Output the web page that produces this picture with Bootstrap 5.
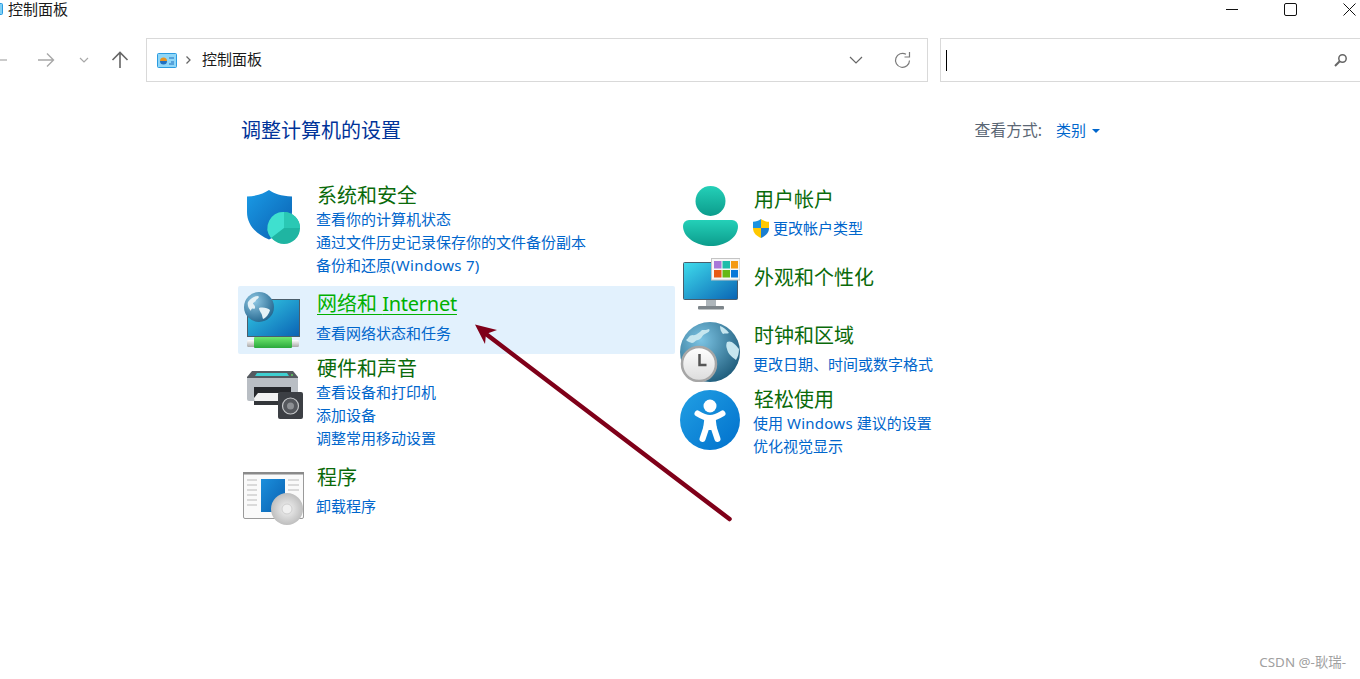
<!DOCTYPE html>
<html lang="zh-CN">
<head>
<meta charset="utf-8">
<title>控制面板</title>
<link rel="stylesheet" href="https://cdn.jsdelivr.net/npm/bootstrap@5.3.0/dist/css/bootstrap.min.css">
<style>
html,body{height:679px;overflow:hidden;background:#fff}
body{font-family:"Noto Sans","Noto Sans CJK SC",sans-serif;font-size:15px;color:#1a1a1a;position:relative}
.ttl-bar{height:18px;line-height:18px}
.ttl-icon{margin-left:-9px;margin-top:3px;margin-right:5px}
.win-btns{gap:46px;padding-right:4px}
.tool-row{margin-top:20px;gap:12px;height:44px}
.nav-art{width:134px;flex:none}
.addr-box,.find-box{border:1px solid #d9d9d9;height:44px}
.addr-box{flex:1 1 auto;padding:0 15px 0 10px}
.addr-txt{margin-left:10px;line-height:20px;margin-top:-3px}
.refresh-art{margin-left:31px}
.find-box{width:420px;flex:none;border-right:0;padding:0 12px 0 5px}
.caret-line{width:1px;height:21px;background:#000}
.main-head{margin-top:37px;padding:0 260px 0 241px;height:24px}
.main-title{font-size:20px;line-height:24px;color:#003399;font-weight:400;margin:0}
.view-wrap{margin-top:-1px}
.view-lbl{color:#5b6775;font-size:15.8px}
.view-val{color:#0066cc;text-decoration:none;margin-left:14px}
.view-tri{margin-left:6px;width:0;height:0;border:4px solid transparent;border-top:4px solid #0066cc;border-bottom:0}
.cols{margin-top:35px;margin-left:238px}
.col-left{width:437px;flex:none}
.col-right{margin-top:8px;margin-left:5px}
.item-l{padding:6px 0 10px 3px;border-radius:2px;gap:12px}
.item-first{padding-bottom:9px}
.item-tight{padding-top:3px}
.item-hot{background:#e2f1fd;padding-bottom:9px}
.hot-art{margin-bottom:-4px}
.printer-art{margin-top:-1px}
.item-r{gap:14px}
.pb-a{padding-bottom:10px}
.pb-b{padding-bottom:6px}
.pb-c{padding-bottom:5px}
.txt-a{margin-top:2px}
.txt-b{margin-top:10px}
.txt-c{margin-top:1px}
.mt-icon{margin-top:3px}
.cat-title{font-size:20px;line-height:24px;color:#0a6a0a;text-decoration:none;display:block}
.hot-title{color:#00b000;text-decoration:underline;text-underline-offset:3px;text-decoration-thickness:1px}
.cat-link{font-size:15px;line-height:23px;color:#0066cc;text-decoration:none;display:block;margin-left:-1px}
.uac-link .cat-link{margin-left:0}
.solo-gap{margin-top:5px}
.hot-gap{margin-top:6px}
.lat-tight{letter-spacing:-.25px}
.lat-wide{letter-spacing:.27px}
.uac-link{margin-left:-2px;gap:3px}
.arrow-over{position:absolute;left:0;top:0;pointer-events:none}
.mark-csdn{position:absolute;right:14px;top:654px;font-size:13.4px;line-height:16px;color:#a0a0a0}
</style>
</head>
<body>

<div class="d-flex ttl-bar">
  <svg class="ttl-icon" width="12" height="12" viewBox="0 0 12 12"><rect x=".5" y=".5" width="11" height="11" rx="1" fill="#7fd0f5" stroke="#2b9be0"/></svg>
  <span>控制面板</span>
  <div class="d-flex align-items-center win-btns ms-auto">
    <svg width="12" height="12" viewBox="0 0 12 12"><path d="M0 6.500h12" stroke="#111" stroke-width="1"/></svg>
    <svg width="13" height="13" viewBox="0 0 13 13"><rect x=".5" y=".5" width="12" height="12" rx="1.500" fill="none" stroke="#111"/></svg>
    <svg width="13" height="13" viewBox="0 0 13 13"><path d="M.5.5l12 12M12.500.5l-12 12" stroke="#111"/></svg>
  </div>
</div>

<div class="d-flex tool-row">
  <svg class="nav-art" width="134" height="44" viewBox="0 0 134 44">
    <path d="M-3 22h10" stroke="#b5b5b5" stroke-width="1.400" fill="none"/>
    <path d="M38 22h15M47 15.500l6.500 6.500-6.500 6.500" stroke="#a8a8a8" stroke-width="1.400" fill="none"/>
    <path d="M80 20l4 4 4-4" stroke="#a8a8a8" stroke-width="1.200" fill="none"/>
    <path d="M120 30V14.500M112.500 22l7.500-7.500 7.500 7.500" stroke="#666" stroke-width="1.600" fill="none"/>
  </svg>
  <div class="addr-box d-flex align-items-center">
    <svg width="20" height="15" viewBox="0 0 20 15">
      <rect x=".5" y=".5" width="19" height="14" rx="1" fill="#8fd6f7" stroke="#2b9be0"/>
      <path d="M3 8a3.500 3.500 0 0 1 7 0z" fill="#e89320"/><path d="M3 8h7a3.500 3.500 0 0 1-7 0z" fill="#1f6fc0"/>
      <path d="M12 5h5M14 9h3M12 11h5" stroke="#1f6fc0" stroke-width="1.200"/>
    </svg>
    <svg class="ms-2" width="7" height="10" viewBox="0 0 7 10"><path d="M1.500 1.500L5 5 1.500 8.500" fill="none" stroke="#666" stroke-width="1.300"/></svg>
    <span class="addr-txt">控制面板</span>
    <svg class="ms-auto" width="14" height="8" viewBox="0 0 14 8"><path d="M1 1l6 6 6-6" fill="none" stroke="#666" stroke-width="1.200"/></svg>
    <svg class="refresh-art" width="18" height="18" viewBox="0 0 18 18"><path d="M15.500 9.500A7 7 0 1 1 12 3.300" fill="none" stroke="#7a7a7a" stroke-width="1.200"/><path d="M15.500 1v5h-5" fill="none" stroke="#7a7a7a" stroke-width="1.200"/></svg>
  </div>
  <div class="find-box d-flex align-items-center justify-content-between">
    <span class="caret-line"></span>
    <svg width="14" height="14" viewBox="0 0 14 14"><circle cx="8.500" cy="5.500" r="3.700" fill="none" stroke="#666" stroke-width="1.500"/><path d="M5.700 8.300L1 13" stroke="#666" stroke-width="2"/></svg>
  </div>
</div>

<div class="d-flex justify-content-between align-items-center main-head">
  <h1 class="main-title">调整计算机的设置</h1>
  <div class="d-flex align-items-center view-wrap">
    <span class="view-lbl">查看方式:</span>
    <a class="view-val" href="#">类别</a>
    <span class="view-tri"></span>
  </div>
</div>

<div class="d-flex cols">
  <div class="col-left">

    <div class="d-flex item-l item-first">
      <svg width="64" height="64" viewBox="0 0 64 64">
        <defs>
          <linearGradient id="gShield" x1="0" y1="0" x2="1" y2="1"><stop offset="0" stop-color="#1a9be6"/><stop offset="1" stop-color="#0a5fb0"/></linearGradient>
        </defs>
        <path d="M28 6c5 3.500 12 6 23 6.500V28c0 13-10 22-23 27.500C15 50 6 41 6 28V12.500C16 12 23 9.500 28 6z" fill="url(#gShield)"/>
        <circle cx="43" cy="44" r="16" fill="#1fb5a2"/>
        <path d="M43 28a16 16 0 0 1 16 16H43z" fill="#2ac8b4"/>
        <path d="M43 28v16L30 54a16 16 0 0 1 13-26z" fill="#3fe0cf"/>
      </svg>
      <div>
        <a class="cat-title" href="#">系统和安全</a>
        <a class="cat-link" href="#">查看你的计算机状态</a>
        <a class="cat-link" href="#">通过文件历史记录保存你的文件备份副本</a>
        <a class="cat-link" href="#">备份和还原<span class="lat-wide">(Windows 7)</span></a>
      </div>
    </div>

    <div class="d-flex item-l item-hot">
      <svg class="hot-art" width="64" height="56" viewBox="0 0 64 56">
        <defs>
          <linearGradient id="gScreen" x1="0" y1="0" x2="1" y2="1"><stop offset="0" stop-color="#35cfe6"/><stop offset="1" stop-color="#0a62b4"/></linearGradient>
          <radialGradient id="gGlobe" cx=".35" cy=".3" r=".8"><stop offset="0" stop-color="#8fc8e4"/><stop offset="1" stop-color="#1c5f88"/></radialGradient>
          <linearGradient id="gBar" x1="0" y1="0" x2="0" y2="1"><stop offset="0" stop-color="#6fe86f"/><stop offset="1" stop-color="#2aa83c"/></linearGradient>
          <linearGradient id="gCap" x1="0" y1="0" x2="0" y2="1"><stop offset="0" stop-color="#ffffff"/><stop offset="1" stop-color="#a8a8a8"/></linearGradient>
        </defs>
        <rect x="6.500" y="7.500" width="52" height="37" fill="url(#gScreen)" stroke="#4a5d6b"/>
        <rect x="6" y="48" width="52" height="7" rx="1.500" fill="url(#gCap)"/>
        <rect x="13" y="45" width="38" height="11" rx="1" fill="url(#gBar)"/>
        <circle cx="18" cy="15" r="15" fill="url(#gGlobe)"/>
        <path d="M7 10c3-4 6-6 10-6 2 1 0 3-2 4 0 2-3 2-3 4 2 1 3 4 1 5-2-1-3 0-3 2-2-2-4-5-3-9zM18 16c4-1 9 0 11 2-1 4-4 8-7 9-1-3-1-5-2-6-1-2-2-3-2-5z" fill="#e4f1f6"/>
      </svg>
      <div>
        <a class="cat-title hot-title" href="#">网络和 <span class="lat-tight">Internet</span></a>
        <a class="cat-link hot-gap" href="#">查看网络状态和任务</a>
      </div>
    </div>

    <div class="d-flex item-l item-tight">
      <svg class="printer-art" width="64" height="64" viewBox="0 0 64 64">
        <path d="M11 15h41l5 6v7H6v-7z" fill="#555a60"/>
        <path d="M16 17h30l2 3H14z" fill="#3ecfd0"/>
        <circle cx="51" cy="19" r="1" fill="#5fd05f"/>
        <path d="M6 22h51v21a2 2 0 0 1-2 2H8a2 2 0 0 1-2-2z" fill="#b9bec4"/>
        <rect x="13" y="31" width="37" height="11" fill="#26282c"/>
        <path d="M13 42l4-5h28v9H14z" fill="#f1f1f1"/>
        <rect x="13" y="45" width="28" height="4" fill="#33363a"/>
        <rect x="37" y="36" width="25" height="27" rx="2" fill="#3c3f44"/>
        <circle cx="49.500" cy="50" r="8" fill="#55585d" stroke="#c4c6c8" stroke-width="1.200"/>
        <circle cx="49.500" cy="50" r="3.500" fill="#8d9094"/>
      </svg>
      <div>
        <a class="cat-title" href="#">硬件和声音</a>
        <a class="cat-link" href="#">查看设备和打印机</a>
        <a class="cat-link" href="#">添加设备</a>
        <a class="cat-link" href="#">调整常用移动设置</a>
      </div>
    </div>

    <div class="d-flex item-l">
      <svg width="64" height="64" viewBox="0 0 64 64">
        <defs>
          <linearGradient id="gDoc" x1="0" y1="0" x2="1" y2="1"><stop offset="0" stop-color="#1b8fdc"/><stop offset="1" stop-color="#0a60b0"/></linearGradient>
          <radialGradient id="gDisc" cx=".5" cy=".5" r=".6"><stop offset="0" stop-color="#f4f4f4"/><stop offset="1" stop-color="#b4b4b4"/></radialGradient>
        </defs>
        <rect x="2.500" y="6.500" width="60" height="46" rx="1.500" fill="#fafafa" stroke="#9a9a9a"/>
        <rect x="2" y="6" width="61" height="2.500" fill="#8a8a8a"/>
        <path d="M6 14h10M6 19h10M6 24h10M6 29h10M6 34h10M6 39h10M47 14h11M47 19h11M47 24h11" stroke="#d0d0d0" stroke-width="1.300"/>
        <rect x="20" y="13" width="24" height="33" fill="url(#gDoc)"/>
        <circle cx="46" cy="43" r="16" fill="url(#gDisc)"/>
        <circle cx="46" cy="43" r="5" fill="#f0f0f0" stroke="#cfcfcf"/>
      </svg>
      <div>
        <a class="cat-title" href="#">程序</a>
        <a class="cat-link solo-gap" href="#">卸载程序</a>
      </div>
    </div>
  </div>

  <div class="col-right">
    <div class="d-flex item-r pb-a">
      <svg width="60" height="60" viewBox="0 0 60 60">
        <defs>
          <linearGradient id="gUser" x1="0" y1="0" x2="0" y2="1"><stop offset="0" stop-color="#24d0b8"/><stop offset="1" stop-color="#0c9c8c"/></linearGradient>
        </defs>
        <circle cx="30.500" cy="15" r="15" fill="url(#gUser)"/>
        <path d="M3 40a6 6 0 0 1 6-6h43a6 6 0 0 1 6 6c0 12-13 20-27 20S3 52 3 40z" fill="url(#gUser)"/>
      </svg>
      <div class="txt-a">
        <a class="cat-title" href="#">用户帐户</a>
        <div class="d-flex align-items-center solo-gap uac-link">
          <svg width="18" height="19" viewBox="0 0 18 19">
            <path d="M9 0c2.500 1.800 5 2.500 8 2.800V9H9z" fill="#ffc800"/>
            <path d="M9 0C6.500 1.800 4 2.500 1 2.800V9h8z" fill="#1c93e0"/>
            <path d="M1 9h8v10C4.500 17 1 14 1 9z" fill="#ffc800"/>
            <path d="M17 9H9v10c4.500-2 8-5 8-10z" fill="#1c7fd0"/>
          </svg>
          <a class="cat-link" href="#">更改帐户类型</a>
        </div>
      </div>
    </div>

    <div class="d-flex item-r pb-b">
      <svg width="60" height="60" viewBox="0 0 60 60">
        <defs>
          <linearGradient id="gMon" x1="0" y1="0" x2="1" y2="1"><stop offset="0" stop-color="#3fdcec"/><stop offset="1" stop-color="#0a64b4"/></linearGradient>
        </defs>
        <rect x="3.500" y="6.500" width="54" height="37" rx="1" fill="url(#gMon)" stroke="#4a5d6b"/>
        <rect x="26" y="44" width="10" height="7" fill="#aeb6bb"/>
        <rect x="18" y="50" width="26" height="3.500" rx="1" fill="#7d858a"/>
        <rect x="31.500" y="2.500" width="28.500" height="21.500" fill="#f7f7f7" stroke="#c4c4c4"/>
        <rect x="34" y="5" width="7.500" height="7.500" fill="#a878d8"/>
        <rect x="42.500" y="5" width="7.500" height="7.500" fill="#1fbcaa"/>
        <rect x="51" y="5" width="7" height="7.500" fill="#f49a14"/>
        <rect x="34" y="14" width="7.500" height="7.500" fill="#e85a14"/>
        <rect x="42.500" y="14" width="7.500" height="7.500" fill="#66b814"/>
        <rect x="51" y="14" width="7" height="7.500" fill="#0a78d8"/>
      </svg>
      <div class="txt-b">
        <a class="cat-title" href="#">外观和个性化</a>
      </div>
    </div>

    <div class="d-flex item-r pb-c">
      <svg width="60" height="60" viewBox="0 0 60 60">
        <defs>
          <radialGradient id="gEarth" cx=".35" cy=".3" r=".85"><stop offset="0" stop-color="#7cc4e4"/><stop offset="1" stop-color="#14506f"/></radialGradient>
          <linearGradient id="gFace" x1="0" y1="0" x2="0" y2="1"><stop offset="0" stop-color="#fff"/><stop offset="1" stop-color="#dcdcdc"/></linearGradient>
        </defs>
        <circle cx="30" cy="30" r="30" fill="url(#gEarth)"/>
        <path d="M6 18c3-2 3-5 7-5 2 1 6-2 9-5 3 0 5 0 7-1 2 2-2 4-4 5-3 1-3 5-7 6-3 0-3 3-6 3-2-1-4-1-6-3zM40 4c3 1 7 4 9 7-2 1-4 0-6 1-2-2-3-5-3-8zM47 20c4-2 8 2 12 7 0 4-1 8-3 11-4-3-8-6-9-11-1-2-1-5 0-7z" fill="#c6e6ef"/>
        <circle cx="19" cy="42" r="17" fill="url(#gFace)" stroke="#a6a6a6" stroke-width="2.500"/>
        <path d="M19.500 32v11h7" fill="none" stroke="#555" stroke-width="2.500"/>
      </svg>
      <div class="txt-a">
        <a class="cat-title" href="#">时钟和区域</a>
        <a class="cat-link solo-gap" href="#">更改日期、时间或数字格式</a>
      </div>
    </div>

    <div class="d-flex item-r">
      <svg class="mt-icon" width="60" height="60" viewBox="0 0 60 60">
        <defs>
          <linearGradient id="gAcc" x1="0" y1="0" x2="1" y2="1"><stop offset="0" stop-color="#22a0e4"/><stop offset="1" stop-color="#0070cc"/></linearGradient>
        </defs>
        <circle cx="30" cy="30" r="30" fill="url(#gAcc)"/>
        <circle cx="30" cy="16" r="6.500" fill="#fff"/>
        <path d="M17.500 23.500c4 2.500 8 4.500 12.500 4.500s8.500-2 12.500-4.500" fill="none" stroke="#fff" stroke-width="6" stroke-linecap="round"/>
        <path d="M24.500 27h11l1.500 13H23z" fill="#fff"/>
        <path d="M26.500 37l-4 12M33.500 37l4 12" stroke="#fff" stroke-width="6" stroke-linecap="round"/>
      </svg>
      <div class="txt-c">
        <a class="cat-title" href="#">轻松使用</a>
        <a class="cat-link" href="#">使用 <span class="lat-wide">Windows</span> 建议的设置</a>
        <a class="cat-link" href="#">优化视觉显示</a>
      </div>
    </div>
  </div>
</div>

<svg class="arrow-over" width="1360" height="679" viewBox="0 0 1360 679">
  <path d="M729.500 519L486 334" stroke="#7f0019" stroke-width="4.500" stroke-linecap="round" fill="none"/>
  <path d="M475 324.500L497 330 486 334 485 344z" fill="#7f0019"/>
</svg>
<div class="mark-csdn">CSDN @-耿瑞-</div>

<script src="https://cdn.jsdelivr.net/npm/bootstrap@5.3.0/dist/js/bootstrap.bundle.min.js"></script>
</body>
</html>
